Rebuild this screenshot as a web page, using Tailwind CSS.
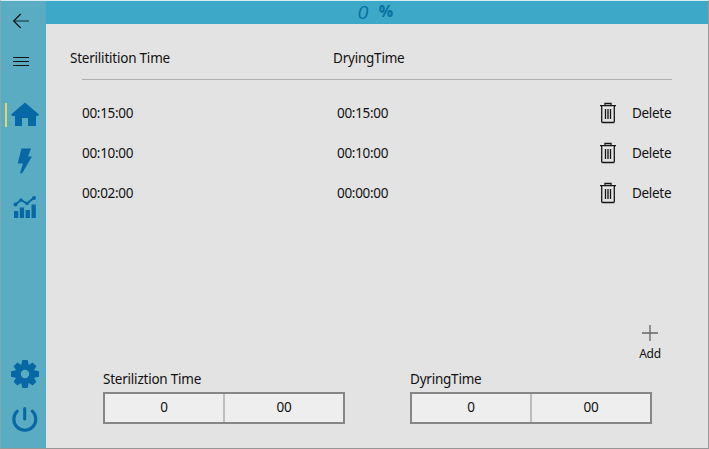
<!DOCTYPE html>
<html lang="en">
<head>
<meta charset="utf-8">
<title>Sterilization presets</title>
<script src="https://cdn.jsdelivr.net/npm/@tailwindcss/browser@4"></script>
</head>
<body class="w-[709px] h-[449px] overflow-hidden bg-[#e3e3e3] font-['Noto_Sans','Open_Sans',sans-serif] text-[13.5px] leading-5 tracking-[-0.3px] text-[#111111]">
<div class="flex w-[709px] h-[449px] border border-t-[#d5edf1] border-l-[#80a8ae] border-r-[#9a9a9a] border-b-[#969696]">
  <nav class="w-[45px] shrink-0 bg-[#5aacc3] flex flex-col text-[#0868a5]">
    <svg class="w-[45px] h-[80px]" viewBox="1 1 45 80" fill="none" stroke="#111">
      <path d="M14 21h15" stroke="#255861" stroke-width="1.5"/><path d="M20.7 14l-7 7 7 7" stroke-width="1.2"/>
      <path d="M13 57.5h16M13 61.5h16M13 65.5h16"/>
    </svg>
    <svg class="w-[45px] h-[150px]" viewBox="1 81 45 150" fill="currentColor">
      <path d="M5 103h2v24H5z" fill="#e2d466"/>
      <path d="M25 102.5L39 114.500L37.800 116H36V126H28V118H22V126H15V116H12.300L11 114.500Z"/>
      <path d="M21.500 148.500H31L28 156.500H32L22 173.500L20 173L23 163.500H17.700Z"/>
      <path d="M14 211h4.300v7h-4.300zM19.800 207.500h4.300v10.500h-4.300zM25.600 210h4.300v8h-4.300zM31.500 204.500h4.300v13.500h-4.300z"/>
      <path d="M15.500 204.500L21 200L27 203.500L34.200 197.500" fill="none" stroke="currentColor" stroke-width="2"/>
      <circle cx="15.500" cy="204.500" r="2"/><circle cx="21" cy="200" r="1.700"/><circle cx="27" cy="203.500" r="1.700"/><circle cx="34" cy="197.900" r="2"/>
    </svg>
    <svg class="w-[45px] h-[98px] mt-auto" viewBox="1 350 45 98" fill="currentColor">
      <g transform="translate(25 374)">
        <path d="M-2.700-14h5.400l1 5h-7.400zM-2.700 14h5.400l1-5h-7.400zM-14-2.700v5.400l5 1v-7.400zM14-2.700v5.400l-5 1v-7.400z"/>
        <path transform="rotate(45)" d="M-2.700-13.500h5.400l1 5h-7.400zM-2.700 13.500h5.400l1-5h-7.400zM-13.500-2.700v5.400l5 1v-7.400zM13.500-2.700v5.400l-5 1v-7.400z"/>
        <circle r="7.100" fill="none" stroke="currentColor" stroke-width="5.800"/>
      </g>
      <path d="M17.300 411.200A11 11 0 1 0 32.300 411.200M24.700 408.500V419" fill="none" stroke="currentColor" stroke-width="3.100" stroke-linecap="round"/>
    </svg>
  </nav>
  <main class="flex-1 flex flex-col bg-[#e3e3e3]">
    <header class="h-[23px] shrink-0 bg-[#3da8c8] flex justify-center text-[18px] leading-[23px] tracking-normal text-[#0870a0] pr-[3px]">
      <span class="font-['Liberation_Sans',sans-serif] italic w-[21px] text-[19px]">0</span><span class="font-['Open_Sans',sans-serif] font-bold text-[16px] -mt-px">%</span>
    </header>
    <div class="flex h-[56px] shrink-0 mx-9 border-b border-[#afafaf] tracking-[-0.22px]">
      <div class="w-[251px] pt-[24px] -ml-3 mr-3">Sterilitition Time</div>
      <div class="pt-[24px] -ml-3 pl-3">DryingTime</div>
    </div>
    <div class="flex flex-col pt-[13px] px-9">
      <div class="flex items-center h-10"><span class="w-[255px]">00:15:00</span><span class="flex-1">00:15:00</span>
        <svg class="w-[18px] h-[22px] mr-[15px] -mt-px" viewBox="0 0 18 22" fill="none" stroke="#151515" stroke-width="1.3"><path d="M1 3.700h16M6 3.500V1.500h6v2M2.700 4v15.500q0 1 1 1h10.600q1 0 1-1V4M6.500 7v10M9 7v10M11.500 7v10"/></svg><span class="w-10">Delete</span></div>
      <div class="flex items-center h-10"><span class="w-[255px]">00:10:00</span><span class="flex-1">00:10:00</span>
        <svg class="w-[18px] h-[22px] mr-[15px] -mt-px" viewBox="0 0 18 22" fill="none" stroke="#151515" stroke-width="1.3"><path d="M1 3.700h16M6 3.500V1.500h6v2M2.700 4v15.500q0 1 1 1h10.600q1 0 1-1V4M6.500 7v10M9 7v10M11.500 7v10"/></svg><span class="w-10">Delete</span></div>
      <div class="flex items-center h-10"><span class="w-[255px]">00:02:00</span><span class="flex-1">00:00:00</span>
        <svg class="w-[18px] h-[22px] mr-[15px] -mt-px" viewBox="0 0 18 22" fill="none" stroke="#151515" stroke-width="1.3"><path d="M1 3.700h16M6 3.500V1.500h6v2M2.700 4v15.500q0 1 1 1h10.600q1 0 1-1V4M6.500 7v10M9 7v10M11.500 7v10"/></svg><span class="w-10">Delete</span></div>
    </div>
    <div class="mt-auto self-end w-10 mr-[38px] flex flex-col items-center text-[12px] leading-4">
      <svg class="w-4 h-4" viewBox="0 0 16 16" stroke="#666" stroke-width="1.300"><path d="M8 0v16M0 8h16"/></svg>
      <span class="mt-[5px]">Add</span>
    </div>
    <div class="flex pl-[57px] gap-[65px] mt-[7px] pb-[24px]">
      <section class="w-[242px]"><div class="h-[23px] tracking-[-0.22px]">Steriliztion Time</div>
        <div class="flex h-8 border-2 border-[#868686] bg-[#eeeeee] text-center leading-[27px]"><span class="w-[120px] border-r-2 border-[#bcbcbc]">0</span><span class="flex-1">00</span></div></section>
      <section class="w-[242px]"><div class="h-[23px] tracking-[-0.22px]">DyringTime</div>
        <div class="flex h-8 border-2 border-[#868686] bg-[#eeeeee] text-center leading-[27px]"><span class="w-[120px] border-r-2 border-[#bcbcbc]">0</span><span class="flex-1">00</span></div></section>
    </div>
  </main>
</div>
</body>
</html>
